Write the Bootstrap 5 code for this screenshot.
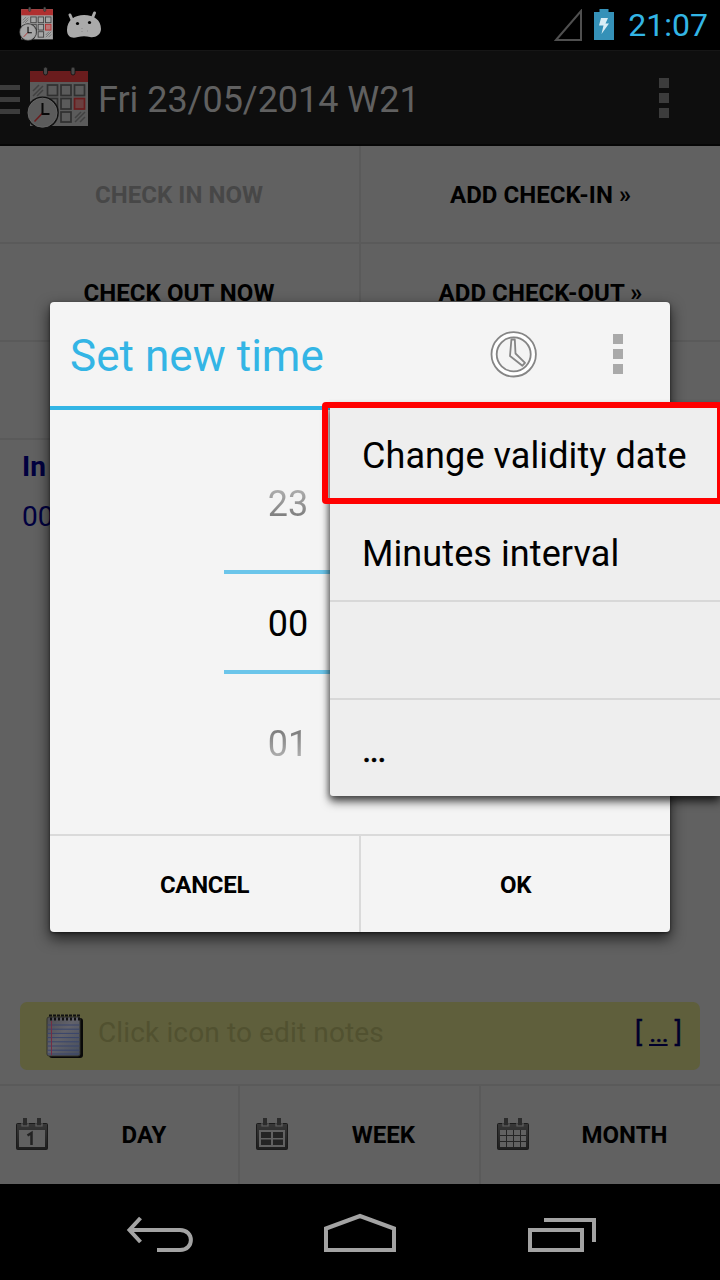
<!DOCTYPE html>
<html lang="en">
<head>
<meta charset="utf-8">
<meta name="viewport" content="width=device-width, initial-scale=1">
<title>Set new time</title>
<link rel="stylesheet" href="https://cdn.jsdelivr.net/npm/bootstrap@5.3.0/dist/css/bootstrap.min.css">
<style>
html, body { margin: 0; background: #000; }
body { font-family: Roboto, "Liberation Sans", sans-serif; color: #000; line-height: 1; }
svg { display: block; flex: none; }
.screen { width: 720px; height: 1280px; background: #616161; white-space: nowrap; }
.status { height: 50px; background: #000; padding: 0 12px 0 19px; }
.app-mark { margin-bottom: 3px; --paper:#a6a6a6; --red:#b02f2f; --hook:#555; --line:#444; --ring:#222; --rim:#999; --redfill:#b77; }
.battery { margin: 0 10px 0 8px; }
.clock { color: #33b5e5; font-size: 32px; }
.actionbar { height: 96px; background: #0e0e0e; border-bottom: 2px solid #060606; box-shadow: inset 0 1px #161616; }
.app-icon { margin: 0 7px 0 4px; --paper:#5b5b5b; --red:#6a1c1d; --hook:#484848; --line:#303030; --ring:#101010; --rim:#666; --redfill:#6b4040; }
.heading { font-size: 36px; color: #606060; padding-top: 6px; letter-spacing: -.03px; }
.tile { height: 98px; border-bottom: 2px solid #5a5a5a; font-size: 24px; font-weight: 700; padding-top: 2px; letter-spacing: .06px; }
.row > .tile { border-right: 1px solid #5a5a5a; }
.row > .tile + .tile { border-left: 1px solid #5a5a5a; border-right: 0; }
.tile.off { color: #474747; }
.tile:first-child span { margin-left: -1px; }
.entries { color: #00003f; font-size: 28px; padding: 13px 22px; }
.entries b { margin-bottom: 22px; }
.notes { height: 68px; margin: 0 20px 14px; border-radius: 7px; background: #5f5f3c; color: #515130; font-size: 28px; padding: 0 18px 0 25px; }
.hint { margin: -6px 0 0 15px; letter-spacing: .13px; }
.more { color: #00002c; margin-top: -6px; -webkit-text-stroke: .3px; }
.more u { letter-spacing: -1.2px; }
.tabs { height: 100px; border-top: 2px solid #5a5a5a; font-size: 24px; font-weight: 700; }
.tabs svg { margin-bottom: 2px; }
.tab-cell { width: 241px; padding-left: 16px; border-right: 2px solid #5a5a5a; }
.tab-cell:first-child { width: 240px; }
.tab-cell:first-child span { padding-left: 2px; }
.tab-cell:last-child { border: 0; width: 239px; }
.navkeys { height: 96px; background: #000; }
.dlg { left: 50px; top: 302px; width: 620px; height: 630px; border-radius: 4px; background: #f4f4f4; box-shadow: 0 6px 14px 1px rgba(0,0,0,.62), 0 1px 3px rgba(0,0,0,.5); }
.dlg-head { height: 108px; border-bottom: 4px solid #33b5e5; padding: 0 47px 0 20px; }
.dlg-title { font-size: 44px; color: #33b5e5; padding-top: 4px; letter-spacing: .04px; }
.wheel { width: 128px; margin-left: 174px; font-size: 36px; padding-top: 34px; }
.wheel .n { height: 120px; }
.wheel .cur { height: 104px; border: 4px solid #6bc5ea; border-width: 4px 0; margin: 6px 0 10px; padding-top: 4px; }
.fade-up, .fade-down { -webkit-background-clip: text; background-clip: text; color: transparent; }
.fade-up { background-image: linear-gradient(#b4b4b4, #747474); }
.fade-down { background-image: linear-gradient(#747474, #b8b8b8); }
.dlg-foot { height: 98px; border-top: 2px solid #dadada; font-size: 24px; font-weight: 700; letter-spacing: -.3px; }
.dlg-foot > div { padding-top: 2px; border-right: 1px solid #dadada; }
.dlg-foot > div + div { border-left: 1px solid #dadada; border-right: 0; }
.popup { left: 330px; top: 404px; width: 390px; height: 392px; padding-top: 2px; background: #eee; border-radius: 3px 0 0 3px; font-size: 36px; letter-spacing: .09px; box-shadow: 0 6px 10px rgba(0,0,0,.6), -1px 2px 6px rgba(0,0,0,.4); }
.popup > div { height: 98px; padding: 4px 0 0 32px; border-bottom: 2px solid #d8d8d8; }
.popup > div:last-child { height: 92px; padding-top: 7px; border: 0; letter-spacing: -1.9px; -webkit-text-stroke: .5px; }
.ring { left: 322px; top: 402px; width: 401px; height: 102px; border: 6px solid #f00; border-radius: 4px; }
</style>
</head>
<body>
<svg width="0" height="0" class="position-absolute">
  <defs>
    <symbol id="planner" viewBox="0 0 64 64">
      <rect x="4" y="6" width="58" height="55" fill="var(--paper)"/>
      <rect x="4" y="6" width="58" height="11" fill="var(--red)"/>
      <g fill="var(--hook)" stroke="var(--ring)" stroke-width=".8"><rect x="17.500" y="2" width="4" height="8" rx="2"/><rect x="45" y="2" width="4" height="8" rx="2"/></g>
      <path d="M7 26l6-6M7 31l10-10M11 31l6-6M49 53l6-6M49 57l10-10M54 57l5-5" stroke="var(--line)" stroke-width="1.500" opacity=".6"/>
      <g fill="none" stroke="var(--line)" stroke-width="1.700">
        <rect x="21.500" y="20" width="10" height="10.500"/><rect x="35" y="20" width="10" height="10.500"/><rect x="48.500" y="20" width="10" height="10.500"/>
        <rect x="21.500" y="33.500" width="10" height="10.500"/><rect x="35" y="33.500" width="10" height="10.500"/><rect x="35" y="47" width="10" height="10"/>
      </g>
      <rect x="48.500" y="33.500" width="10" height="10.500" fill="var(--redfill)" stroke="var(--red)" stroke-width="1.700"/>
      <circle cx="16.500" cy="47.700" r="16.300" fill="var(--ring)"/><circle cx="16.500" cy="47.700" r="14.500" fill="var(--paper)" stroke="var(--rim)" stroke-width="1"/>
      <path d="M16.500 48l-8 8.500" stroke="var(--red)" stroke-width="1.600"/>
      <path d="M16.500 38v11h7" fill="none" stroke="#080808" stroke-width="2"/>
    </symbol>
    <linearGradient id="pg" x2="1" y2="1"><stop offset="0" stop-color="#4c4c52"/><stop offset=".45" stop-color="#62626a"/><stop offset="1" stop-color="#454d5c"/></linearGradient>
    <linearGradient id="cg" x2="0" y2="1"><stop offset="0" stop-color="#383838"/><stop offset="1" stop-color="#1e1e1e"/></linearGradient>
    <symbol id="calbase" viewBox="0 0 32 32">
      <rect x=".5" y="5.500" width="31" height="26" rx="1" fill="url(#cg)" stroke="#1b1b1b"/>
      <path d="M6 5v3h6V5M20 5v3h6V5" fill="none" stroke="#616161" stroke-width="1.200"/>
      <rect x="7" y="0" width="4" height="7" fill="#2c2c2c"/><rect x="21" y="0" width="4" height="7" fill="#2c2c2c"/>
      <rect x="3" y="12" width="26" height="17" fill="#616161"/>
    </symbol>
  </defs>
</svg>

<div class="screen position-relative overflow-hidden d-flex flex-column">
  <div class="status d-flex align-items-center">
    <svg class="app-mark" width="35" height="35"><use href="#planner"/></svg>
    <svg class="ms-2" width="44" height="36" viewBox="0 0 44 36">
      <path d="M8 8l3 7M32.500 6l-3 7" stroke="#aaa" stroke-width="3" stroke-linecap="round"/>
      <path d="M5 23C5 13 13 8 22 8c10 0 17 5 17 14 0 6-6 9-11 8-4-1-8-1-12 0C10 32 5 30 5 23z" fill="#aaa"/>
      <circle cx="15.500" cy="16.500" r="1.600"/><circle cx="27.500" cy="15.500" r="1.600"/>
      <path d="M19.500 21.500h1M19.500 24.500h1M25 24h1" stroke="#888"/>
    </svg>
    <svg class="ms-auto" width="28" height="32" viewBox="0 0 28 32"><path d="M2 31L27 2v29z" fill="none" stroke="#4f4f4f" stroke-width="2"/></svg>
    <svg class="battery" width="28" height="32" viewBox="0 0 28 32"><path d="M9.500 0h9v3H24v28H4V3h5.500z" fill="#3591b8"/><path d="M11 9h7l-2.500 5.500H19L11.500 25l2-8.500H9z" fill="#d9edf5"/></svg>
    <span class="clock">21:07</span>
  </div>
  <div class="actionbar d-flex align-items-center">
    <svg class="mt-1" width="20" height="32" viewBox="0 0 20 32"><path d="M0 4.500h20M0 16.500h20M0 28.500h20" stroke="#3c3c3c" stroke-width="5"/></svg>
    <svg class="app-icon" width="67" height="64" viewBox="0 0 67 64"><use href="#planner" x="2" width="64" height="64"/></svg>
    <span class="heading">Fri 23/05/2014 W21</span>
    <svg class="ms-auto" width="10" height="40" style="margin:2px 51px 0 0" fill="#3c3c3c"><rect width="10" height="10"/><rect y="15" width="10" height="10"/><rect y="30" width="10" height="10"/></svg>
  </div>
  <div class="row g-0">
    <div class="tile off col-6 d-flex align-items-center justify-content-center"><span>CHECK IN NOW</span></div>
    <div class="tile col-6 d-flex align-items-center justify-content-center"><span>ADD CHECK-IN »</span></div>
  </div>
  <div class="row g-0">
    <div class="tile col-6 d-flex align-items-center justify-content-center"><span>CHECK OUT NOW</span></div>
    <div class="tile col-6 d-flex align-items-center justify-content-center"><span>ADD CHECK-OUT »</span></div>
  </div>
  <div class="tile"></div>
  <div class="entries flex-grow-1"><b class="d-block">In</b><span>00</span></div>
  <div class="notes d-flex align-items-center">
    <svg width="38" height="46" viewBox="0 0 38 46">
      <rect x="4" y="5" width="34" height="40" rx="3" fill="#090909"/><rect x="2" y="4" width="33" height="39" rx="2" fill="url(#pg)" stroke="#33332a"/>
      <path d="M2.500 12h32M2.500 16.200h32M2.500 20.400h32M2.500 24.600h32M2.500 28.800h32M2.500 33h32M2.500 37.200h32M2.500 41h32" stroke="#38456c"/>
      <path d="M6.500 8v34" stroke="#742d43"/><path d="M4 2.500h32" stroke="#111" stroke-width="2" stroke-dasharray="3 1"/><path d="M5 6h31" stroke="#111" stroke-width="3" stroke-dasharray="2 2"/>
    </svg>
    <span class="hint">Click icon to edit notes</span>
    <span class="more ms-auto">[ <u>...</u> ]</span>
  </div>
  <div class="tabs d-flex">
    <div class="tab-cell d-flex align-items-center"><svg width="32" height="32"><use href="#calbase"/><path d="M11.500 17.500l4-2.500V27" fill="none" stroke="#222" stroke-width="2.500"/></svg><span class="flex-grow-1 text-center">DAY</span></div>
    <div class="tab-cell d-flex align-items-center"><svg width="32" height="32"><use href="#calbase"/><path d="M5 14h10v6H5zM17 14h10v6H17zM5 21.500h10v5.500H5zM17 21.500h10v5.500H17z" fill="#242424"/></svg><span class="flex-grow-1 text-center">WEEK</span></div>
    <div class="tab-cell d-flex align-items-center"><svg width="32" height="32"><use href="#calbase"/><path d="M9.500 12v17M16.500 12v17M23.500 12v17M3 17.500h26M3 23.500h26" stroke="#242424"/></svg><span class="flex-grow-1 text-center">MONTH</span></div>
  </div>
  <div class="navkeys">
    <svg width="720" height="96" fill="none" stroke="#a3a3a3" stroke-width="4">
      <path d="M130 46h50c14.500 0 14.500 20 0 20h-23"/><path d="M140.500 34l-11 12 11 12"/>
      <path d="M326 66V44.500L360 32l34 12.500V66z"/>
      <path d="M530 46h52v20h-52zM544 36h50v22"/>
    </svg>
  </div>

  <div class="dlg position-absolute d-flex flex-column">
    <div class="dlg-head d-flex align-items-center">
      <span class="dlg-title">Set new time</span>
      <svg class="ms-auto" width="48" height="48" viewBox="0 0 48 48" fill="none" stroke="#858585" stroke-width="1.800">
        <circle cx="23.700" cy="24" r="20" stroke="#fff" stroke-width="4"/><circle cx="23.700" cy="24.300" r="22.200"/><circle cx="23.700" cy="24.300" r="17"/>
        <path d="M21.400 9.500h3.400l.7 14 9.500 9.300-2.600 2.900L20 26z" fill="#f4f4f4" stroke-linejoin="round"/>
      </svg>
      <svg width="10" height="40" style="margin-left:75px" fill="#a9a9a9"><rect width="10" height="10"/><rect y="15" width="10" height="10"/><rect y="30" width="10" height="10"/></svg>
    </div>
    <div class="flex-grow-1">
      <div class="wheel text-center">
        <div class="n d-flex align-items-center justify-content-center"><span class="fade-up">23</span></div>
        <div class="cur d-flex align-items-center justify-content-center">00</div>
        <div class="n d-flex align-items-center justify-content-center"><span class="fade-down">01</span></div>
      </div>
    </div>
    <div class="dlg-foot d-flex">
      <div class="w-50 d-flex align-items-center justify-content-center"><span>CANCEL</span></div>
      <div class="w-50 d-flex align-items-center justify-content-center"><span>OK</span></div>
    </div>
  </div>
  <div class="popup position-absolute">
    <div class="d-flex align-items-center"><span>Change validity date</span></div>
    <div class="d-flex align-items-center"><span>Minutes interval</span></div>
    <div></div>
    <div class="d-flex align-items-center"><span>...</span></div>
  </div>
  <div class="ring position-absolute"></div>
</div>
<script src="https://cdn.jsdelivr.net/npm/bootstrap@5.3.0/dist/js/bootstrap.bundle.min.js"></script>
</body>
</html>
